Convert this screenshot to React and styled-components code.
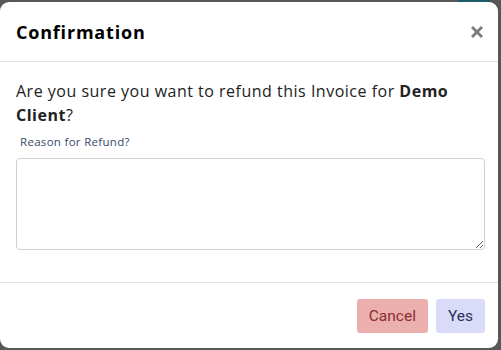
import React from "react";
import styled, { createGlobalStyle } from "styled-components";

const Global = createGlobalStyle`
  html, body { margin: 0; padding: 0; }
  body { background: #575757; font-family: "Open Sans", "Noto Sans", sans-serif; }
`;

const Page = styled.div`
  width: 501px;
  height: 350px;
  background: #575757;
  display: flex;
  flex-direction: column;
  overflow: hidden;
`;

const Backdrop = styled.div`
  height: 2px;
  display: flex;
  flex-shrink: 0;
`;

const Strip = styled.div`
  width: ${(p) => p.$w}px;
  background: ${(p) => p.$c};
`;

const Modal = styled.div`
  width: 498px;
  height: 346px;
  background: #fff;
  border-radius: 9px;
  display: flex;
  flex-direction: column;
  box-sizing: border-box;
`;

const Header = styled.div`
  height: 60px;
  box-sizing: border-box;
  padding: 0 16px;
  display: flex;
  align-items: center;
  justify-content: space-between;
  border-bottom: 1px solid #dee2e6;
`;

const Title = styled.h5`
  margin: 0;
  font-family: "Open Sans", sans-serif;
  font-weight: 700;
  font-size: 18px;
  color: #000;
  letter-spacing: 0.8px;
`;

const Close = styled.button`
  border: 0;
  background: none;
  padding: 0;
  margin-right: -3px;
  width: 16px;
  height: 16px;
  display: flex;
  align-items: center;
  justify-content: center;
  cursor: pointer;
`;

const Body = styled.div`
  flex: 1;
  padding: 17px 16px 0;
  border-bottom: 1px solid #dee2e6;
  display: flex;
  flex-direction: column;
`;

const Message = styled.p`
  margin: 0;
  font-size: 16px;
  line-height: 24px;
  letter-spacing: 0.5px;
  color: #222;
`;

const Strong = styled.b`
  font-weight: 700;
`;

const Label = styled.label`
  display: block;
  margin: 7px 0 0 4px;
  font-size: 11.5px;
  line-height: 16px;
  letter-spacing: 0.3px;
  color: #3a4a6a;
`;

const TextArea = styled.textarea`
  display: block;
  box-sizing: border-box;
  margin-top: 8px;
  width: 469px;
  height: 92px;
  border: 1px solid #ccd0d8;
  border-radius: 4px;
  resize: vertical;
  font-family: inherit;
`;

const Footer = styled.div`
  height: 65px;
  box-sizing: border-box;
  padding: 16px 13px 0 0;
  display: flex;
  justify-content: flex-end;
  gap: 8px;
`;

const Button = styled.button`
  height: 34px;
  padding: 0 ${(p) => p.$px}px;
  border: 0;
  border-radius: 3px;
  background: ${(p) => p.$bg};
  color: ${(p) => p.$fg};
  font-family: "Roboto", "Inter", sans-serif;
  font-size: 15.5px;
  cursor: pointer;
`;

export default function App() {
  return (
    <>
      <Global />
      <Page>
        <Backdrop>
          <Strip $w={458} $c="#575757" />
          <Strip $w={32} $c="#1f5866" />
        </Backdrop>
        <Modal>
          <Header>
            <Title>Confirmation</Title>
            <Close aria-label="Close">
              <svg width="12" height="12" viewBox="0 0 12 12">
                <path d="M2 2L10 10M10 2L2 10" stroke="#7a7a7a" strokeWidth="2.8" strokeLinecap="square" />
              </svg>
            </Close>
          </Header>
          <Body>
            <Message>
              Are you sure you want to refund this Invoice for <Strong>Demo</Strong>{" "}
              <Strong>Client</Strong>?
            </Message>
            <Label>Reason for Refund?</Label>
            <TextArea />
          </Body>
          <Footer>
            <Button $bg="#ebafad" $fg="#8a2d2d" $px={12}>Cancel</Button>
            <Button $bg="#d9dbf9" $fg="#2c2f5a" $px={12}>Yes</Button>
          </Footer>
        </Modal>
      </Page>
    </>
  );
}
